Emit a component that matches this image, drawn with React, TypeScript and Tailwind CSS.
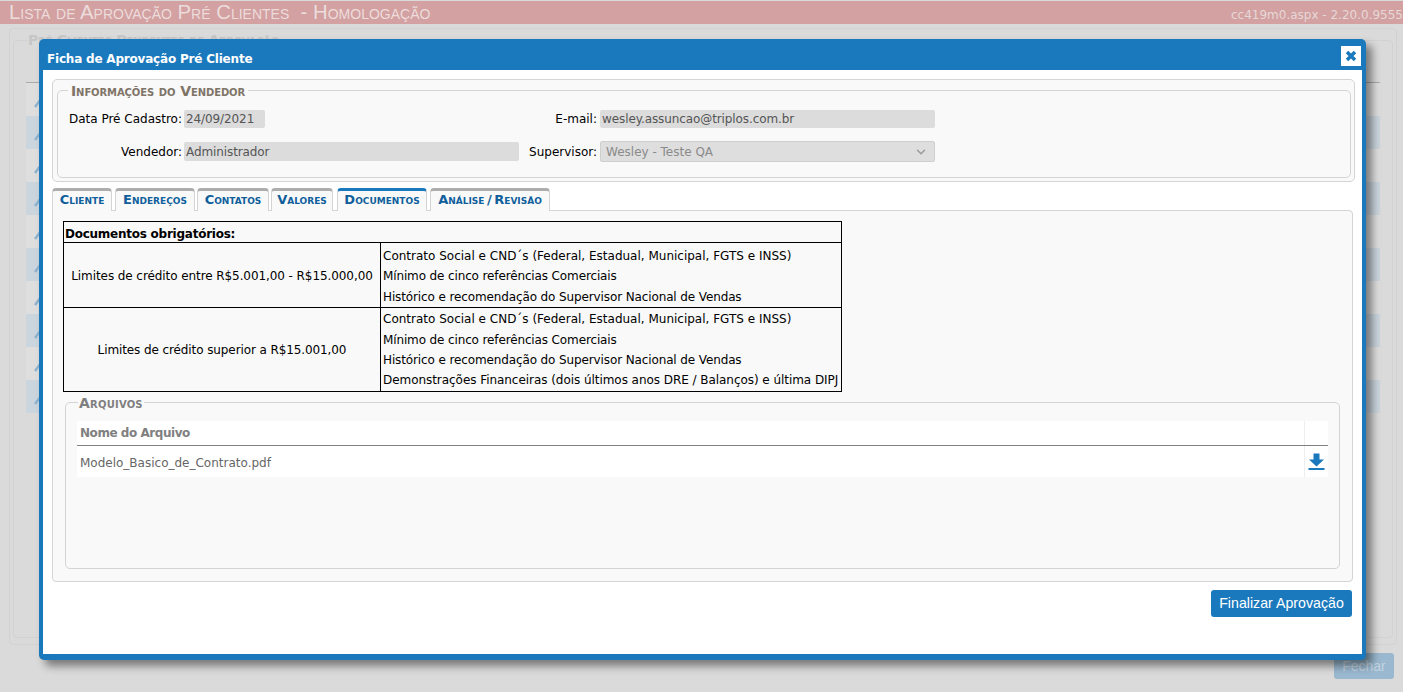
import React from 'react';
import { ChevronDown } from 'lucide-react';

const verdana = "font-['DejaVu_Sans',sans-serif]";
const tabs = ['Cliente', 'Endereços', 'Contatos', 'Valores', 'Documentos', 'Análise / Revisão'];
const tabBoxes = ['w-[60px]', 'w-[80px] ml-[3px]', 'w-[72px] ml-[2px]', 'w-[62px] ml-[2px]', 'w-[90px] ml-[4px]', 'w-[120px] ml-[3px]'];

const docsBase = [
    { text: 'Contrato Social e CND´s (Federal, Estadual, Municipal, FGTS e INSS)', fit: '' },
    { text: 'Mínimo de cinco referências Comerciais', fit: 'tracking-[-0.13px]' },
    { text: 'Histórico e recomendação do Supervisor Nacional de Vendas', fit: 'tracking-[-0.12px]' },
];

function Backdrop() {
    return (
        <div className="flex h-[692px] flex-col bg-[#dadada]">
            <div className="mt-px flex h-[23px] justify-between bg-[#d3a1a1] pl-[9px] text-[#ecdcdc]">
                <span className="whitespace-pre font-['Liberation_Sans',sans-serif] text-[20.35px] leading-[22px] [font-variant:small-caps]">Lista de Aprovação Pré Clientes  - Homologação</span>
                <span className={`${verdana} whitespace-nowrap pt-[6px] text-[12px] leading-[16px] text-[#e6d8d8]`}>cc419m0.aspx - 2.20.0.9555</span>
            </div>
            <div className="ml-[9px] mr-[6px] mt-[4px] h-[617px] rounded border border-[#d2d2d2] px-[3px] pt-[4px]">
                <fieldset className="h-[605px] rounded border border-[#d2d2d2] px-[12px]">
                    <legend className={`${verdana} ml-[2px] text-[14px] font-bold leading-[14px] tracking-[-0.2px] text-[#c6c6c6] [font-variant:small-caps]`}>Pré Clientes Pendentes de Aprovação</legend>
                    <div className="mt-[35px] border-b border-[#a9a9a9]" />
                    <div>
                        {[0, 1, 2, 3, 4, 5, 6, 7, 8, 9].map((i) => (
                            <div key={i} className={`flex h-[33px] items-center pl-[8px] ${i % 2 === 1 ? 'bg-[#cbd5dd]' : 'bg-[#dedede]'}`}>
                                <svg width="16" height="16" viewBox="0 0 16 16" className="text-[#8fb3cf]">
                                    <path d="M1 15 L7 7 L9 1 M7 7 L11 12" stroke="currentColor" strokeWidth="2.5" fill="none" />
                                </svg>
                            </div>
                        ))}
                    </div>
                </fieldset>
            </div>
            <div className="mt-[8px] flex justify-end pr-[9px]">
                <div className="flex h-[26px] w-[60px] items-center justify-center rounded-[3px] bg-[#9ab8cf] font-['Liberation_Sans',sans-serif] text-[14px] text-[#c3d3df]">Fechar</div>
            </div>
        </div>
    );
}

function Field({ label, value, labelClass, inputClass }: { label: string; value: string; labelClass: string; inputClass: string }) {
    return (
        <div className="flex items-center">
            <span className={`${labelClass} whitespace-nowrap pt-px text-right text-[12px] text-black`}>{label}</span>
            <span className={`${inputClass} flex items-center rounded-[2px] bg-[#dcdcdc] pl-[2px] pt-px text-[12px] tracking-[-0.1px] text-[#555555]`}>{value}</span>
        </div>
    );
}

function VendorInfo() {
    return (
        <div className="mx-[9px] mt-[9px] h-[103px] w-[1303px] rounded-[5px] border border-[#d4d4d4] bg-[#f9f9f9] pl-[4px] pr-[3px] pb-[2px]">
            <fieldset className="mt-[3px] h-[95px] rounded-[5px] border border-[#d4d4d4]">
                <legend className="ml-[10px] px-[3px] pt-[2px] text-[14px] font-bold leading-[13px] tracking-[-0.1px] text-[#7f7468] [font-variant:small-caps]">Informações do Vendedor</legend>
                <div className="mt-[11px] flex">
                    <Field label="Data Pré Cadastro:" value="24/09/2021" labelClass="w-[124px]" inputClass="ml-[2px] h-[18px] w-[81px]" />
                    <div className="ml-[228px]">
                        <Field label="E-mail:" value="wesley.assuncao@triplos.com.br" labelClass="w-[104px]" inputClass="ml-[3px] h-[18px] w-[335px]" />
                    </div>
                </div>
                <div className="mt-[13px] flex items-center">
                    <Field label="Vendedor:" value="Administrador" labelClass="w-[124px]" inputClass="ml-[2px] h-[19px] w-[335px]" />
                    <div className="ml-[-26px] flex items-center">
                        <span className="w-[104px] whitespace-nowrap pl-[35px] pt-px text-right text-[12px] text-black">Supervisor:</span>
                        <div className="ml-[3px] flex h-[21px] w-[335px] items-center justify-between rounded-[2px] border border-[#cfcfcf] bg-[#dedede] pl-[5px] pr-[6px] pt-px text-[12px] text-[#8a8a8a]">
                            <span>Wesley - Teste QA</span>
                            <ChevronDown size={14} strokeWidth={2.5} className="text-[#9a9a9a]" />
                        </div>
                    </div>
                </div>
            </fieldset>
        </div>
    );
}

function TabStrip() {
    return (
        <div className="ml-[9px] mt-[6px] flex h-[22px]">
            {tabs.map((t, i) => (
                <div
                    key={t}
                    className={`${tabBoxes[i]} z-10 flex h-[23px] items-center justify-center rounded-t-[4px] border-x border-t-[3px] border-x-[#d4d4d4] bg-[#f9f9f9] pb-[3px] text-[13px] font-bold text-[#0f5f9c] [font-variant:small-caps] [word-spacing:-2px] ${i === 4 ? 'border-t-[#1a79bd]' : 'border-t-[#adadad]'}`}
                >
                    {t}
                </div>
            ))}
        </div>
    );
}

function RequiredDocs() {
    const cell = 'border border-black';
    return (
        <table className="ml-[10px] mt-[10px] w-[779px] table-fixed border-collapse text-[12px] text-black">
            <colgroup>
                <col className="w-[317px]" />
                <col />
            </colgroup>
            <tbody>
                <tr className="h-[21px]">
                    <td colSpan={2} className={`${cell} px-px pt-[4px] font-bold leading-[16px] tracking-[-0.25px]`}>Documentos obrigatórios:</td>
                </tr>
                <tr className="h-[64px]">
                    <td className={`${cell} pt-[2px] text-center tracking-[-0.08px]`}>Limites de crédito entre R$5.001,00 - R$15.000,00</td>
                    <td className={`${cell} pl-[2px] pt-[3px] leading-[20.3px]`}>
                        {docsBase.map((d) => <div key={d.text} className={`whitespace-nowrap ${d.fit}`}>{d.text}</div>)}
                    </td>
                </tr>
                <tr className="h-[84px]">
                    <td className={`${cell} pt-[2px] text-center tracking-[-0.1px]`}>Limites de crédito superior a R$15.001,00</td>
                    <td className={`${cell} pl-[2px] pt-px leading-[20.3px]`}>
                        {docsBase.map((d) => <div key={d.text} className={`whitespace-nowrap ${d.fit}`}>{d.text}</div>)}
                        <div className="whitespace-nowrap tracking-[-0.05px]">Demonstrações Financeiras (dois últimos anos DRE / Balanços) e última DIPJ</div>
                    </td>
                </tr>
            </tbody>
        </table>
    );
}

function Files() {
    return (
        <fieldset className="ml-[12px] mt-[3px] h-[174px] w-[1275px] rounded-[5px] border border-[#d4d4d4] px-[11px]">
            <legend className="ml-[1px] px-px pt-[2px] text-[14px] font-bold leading-[13px] tracking-[0.2px] text-[#7f7f7f] [font-variant:small-caps]">Arquivos</legend>
            <div className="mt-[11px] bg-white">
                <div className="flex h-[25px] border-b border-[#808080]">
                    <div className="flex-1 pl-[3px] pt-[3px] text-[12px] font-bold tracking-[-0.45px] text-[#808080]">Nome do Arquivo</div>
                    <div className="w-[24px] border-l border-[#eeeeee]" />
                </div>
                <div className="flex h-[31px]">
                    <div className="flex flex-1 items-center pl-[3px] pt-[4px] text-[12px] text-[#666666]">Modelo_Basico_de_Contrato.pdf</div>
                    <div className="flex w-[24px] items-center justify-center border-l border-[#eeeeee] pr-px pt-[2px]">
                        <svg width="17" height="18" viewBox="0 0 17 18" className="text-[#1a79bd]">
                            <path d="M5.5 0.5 H11.5 V6.5 H16 L8.5 13.5 L1 6.5 H5.5 Z" fill="currentColor" />
                            <rect x="0.5" y="15" width="16" height="2" fill="currentColor" />
                        </svg>
                    </div>
                </div>
            </div>
        </fieldset>
    );
}

function Modal() {
    return (
        <div className={`${verdana} absolute left-[39px] top-[39px] flex h-[621px] w-[1327px] flex-col rounded-[5px] bg-[#1a79bd] px-[4px] pb-[6px] shadow-[6px_6px_9px_rgba(0,0,0,0.45)]`}>
            <div className="flex h-[31px] shrink-0 items-end justify-between pb-[4px]">
                <span className="pl-[4px] text-[12px] font-bold leading-[14px] tracking-[-0.2px] text-white">Ficha de Aprovação Pré Cliente</span>
                <button className="mr-px flex h-[20px] w-[20px] items-center justify-center bg-white">
                    <svg width="12" height="12" viewBox="0 0 12 12" className="text-[#1a79bd]">
                        <path d="M2 2 L10 10 M10 2 L2 10" stroke="currentColor" strokeWidth="3.5" />
                    </svg>
                </button>
            </div>
            <div className="flex-1 bg-white">
                <VendorInfo />
                <TabStrip />
                <div className="ml-[9px] h-[372px] w-[1301px] rounded-b-[4px] rounded-tr-[4px] border border-[#d4d4d4] bg-[#f9f9f9]">
                    <RequiredDocs />
                    <Files />
                </div>
                <div className="mt-[8px] flex justify-end pr-[10px]">
                    <button className="h-[27px] w-[141px] rounded-[3px] bg-[#1a79bd] font-['Liberation_Sans',sans-serif] text-[14.2px] text-white">Finalizar Aprovação</button>
                </div>
            </div>
        </div>
    );
}

export default function App() {
    return (
        <div className="relative h-[692px] overflow-hidden">
            <Backdrop />
            <Modal />
        </div>
    );
}
